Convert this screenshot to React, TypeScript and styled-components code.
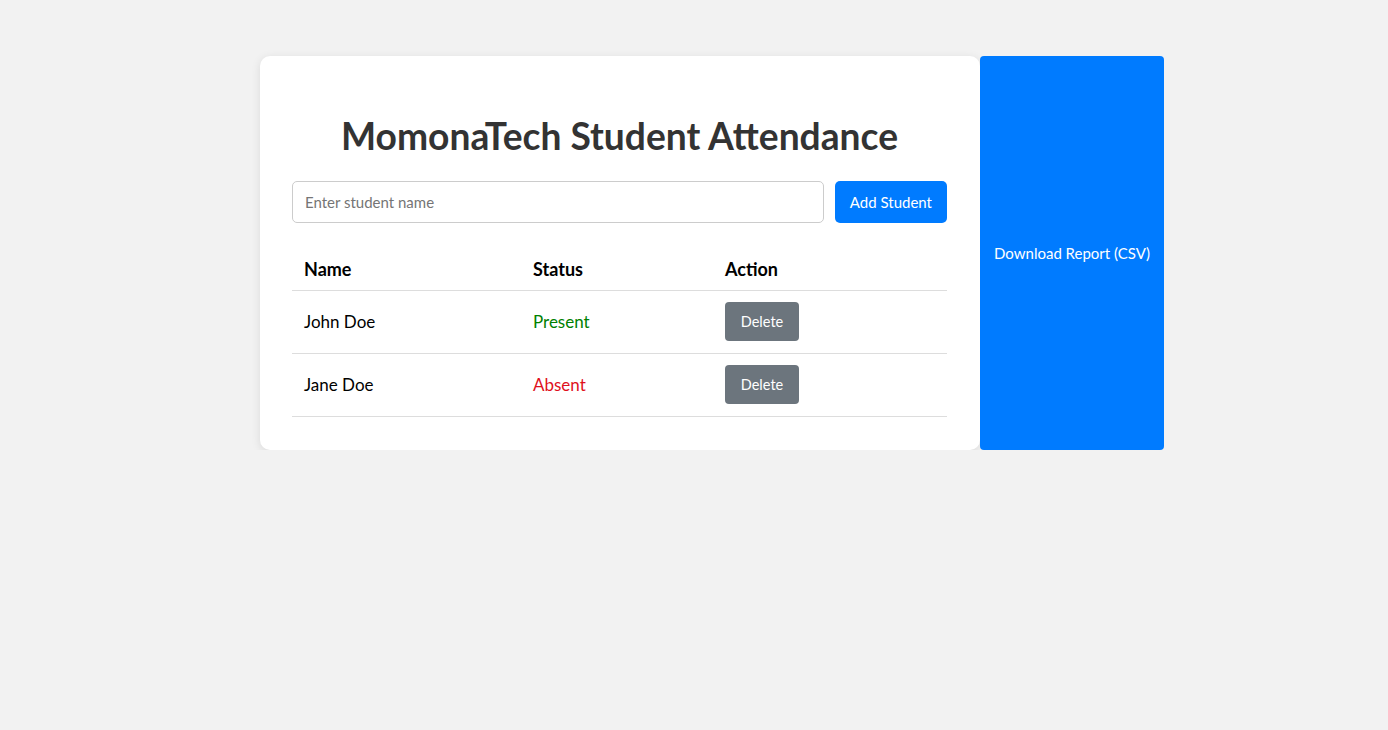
import React, { useState } from "react";
import styled, { createGlobalStyle } from "styled-components";

const GlobalStyle = createGlobalStyle`
  html, body {
    margin: 0;
    padding: 0;
    background: #f2f2f2;
    font-family: "Segoe UI", Lato, "Liberation Sans", sans-serif;
  }
  * { box-sizing: border-box; }
`;

const Page = styled.div`
  display: flex;
  align-items: stretch;
  padding: 56px 0 0 260px;
`;

const Card = styled.div`
  width: 720px;
  padding: 32px 33px 33px 32px;
  background: #fff;
  border-radius: 10px;
  box-shadow: 0 2px 10px rgba(0, 0, 0, 0.1);
`;

const Title = styled.h1`
  margin: 26px 0 0;
  height: 43px;
  line-height: 43px;
  text-align: center;
  font-size: 37.2px;
  font-weight: 700;
  color: #333;
`;

const Form = styled.div`
  display: flex;
  gap: 11px;
  margin-top: 24px;
`;

const Input = styled.input`
  flex: 1;
  height: 42px;
  padding: 0 12px;
  border: 1px solid #ccc;
  border-radius: 5px;
  font-family: inherit;
  font-size: 15px;
  color: #333;
  outline: none;
  &::placeholder {
    color: #757575;
  }
`;

const PrimaryButton = styled.button`
  height: 42px;
  padding: 0 15px;
  border: none;
  border-radius: 5px;
  background: #007bff;
  color: #fff;
  font-family: inherit;
  font-size: 15px;
  cursor: pointer;
`;

const Table = styled.table`
  width: 100%;
  margin-top: 25px;
  border-collapse: collapse;
`;

const Th = styled.th<{ $w: number }>`
  width: ${(p) => p.$w}px;
  padding: 0 12px;
  height: 42px;
  text-align: left;
  font-size: 18px;
  font-weight: 700;
  color: #000;
  border-bottom: 1px solid #ddd;
`;

const Td = styled.td<{ $color?: string }>`
  padding: 11.5px 12px 11.5px;
  font-size: 17px;
  color: ${(p) => p.$color || "#000"};
  border-bottom: 1px solid #ddd;
`;

const DeleteButton = styled.button`
  display: block;
  width: 74px;
  height: 39px;
  border: none;
  border-radius: 4px;
  background: #6c757d;
  color: #fff;
  font-family: inherit;
  font-size: 14.5px;
  cursor: pointer;
`;

const ReportButton = styled.button`
  width: 184px;
  border: none;
  border-radius: 4px;
  background: #007bff;
  color: #fff;
  font-family: inherit;
  font-size: 15px;
  padding: 0;
  cursor: pointer;
`;

type Student = { name: string; present: boolean };

export default function App() {
  const [students, setStudents] = useState<Student[]>([
    { name: "John Doe", present: true },
    { name: "Jane Doe", present: false },
  ]);
  const [name, setName] = useState("");

  const add = () => {
    if (!name.trim()) return;
    setStudents([...students, { name: name.trim(), present: true }]);
    setName("");
  };

  return (
    <>
      <GlobalStyle />
      <Page>
        <Card>
          <Title>MomonaTech Student Attendance</Title>
          <Form>
            <Input
              placeholder="Enter student name"
              value={name}
              onChange={(e) => setName(e.target.value)}
            />
            <PrimaryButton onClick={add}>Add Student</PrimaryButton>
          </Form>
          <Table>
            <thead>
              <tr>
                <Th $w={229}>Name</Th>
                <Th $w={192}>Status</Th>
                <Th $w={234}>Action</Th>
              </tr>
            </thead>
            <tbody>
              {students.map((s, i) => (
                <tr key={i}>
                  <Td>{s.name}</Td>
                  <Td $color={s.present ? "#008000" : "#e0101c"}>
                    {s.present ? "Present" : "Absent"}
                  </Td>
                  <Td>
                    <DeleteButton
                      onClick={() => setStudents(students.filter((_, j) => j !== i))}
                    >
                      Delete
                    </DeleteButton>
                  </Td>
                </tr>
              ))}
            </tbody>
          </Table>
        </Card>
        <ReportButton>Download Report (CSV)</ReportButton>
      </Page>
    </>
  );
}
